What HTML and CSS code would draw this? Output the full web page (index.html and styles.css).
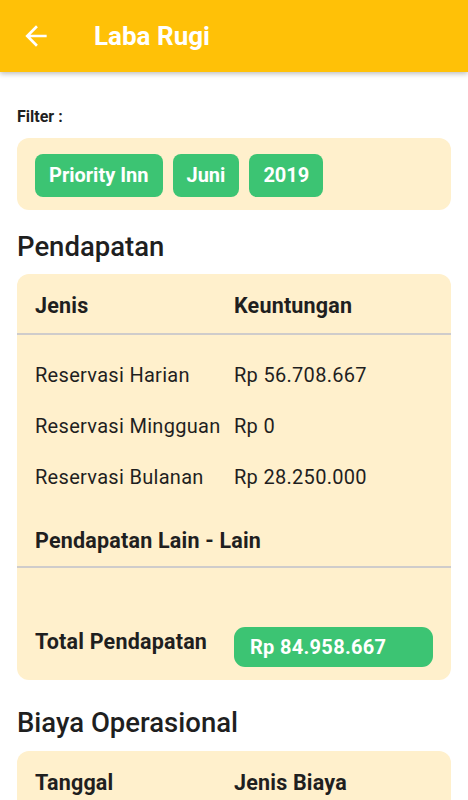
FILE: index.html
```html
<!DOCTYPE html>
<html lang="id">
<head>
    <meta charset="UTF-8">
    <meta name="viewport" content="width=device-width, initial-scale=1.0">
    <title>Laba Rugi</title>
    <link rel="stylesheet" href="styles.css">
</head>
<body>
    <!-- Barre du haut -->
    <div class="appbar">
        <svg class="back" width="32" height="32" viewBox="0 0 24 24">
            <path d="M20 11H7.83l5.59-5.59L12 4l-8 8 8 8 1.41-1.41L7.83 13H20v-2z" fill="#fff"/>
        </svg>
        <span class="title">Laba Rugi</span>
    </div>

    <div class="content">
        <div class="filter-label">Filter :</div>
        <div class="card filter">
            <span class="chip">Priority Inn</span>
            <span class="chip">Juni</span>
            <span class="chip">2019</span>
        </div>

        <h2 class="section">Pendapatan</h2>
        <div class="card">
            <div class="row head">
                <span>Jenis</span>
                <span>Keuntungan</span>
            </div>
            <div class="divider"></div>
            <div class="rows">
                <div class="row item"><span>Reservasi Harian</span><span>Rp 56.708.667</span></div>
                <div class="row item"><span>Reservasi Mingguan</span><span>Rp 0</span></div>
                <div class="row item"><span>Reservasi Bulanan</span><span>Rp 28.250.000</span></div>
            </div>
            <div class="lain">Pendapatan Lain - Lain</div>
            <div class="divider"></div>
            <div class="row total">
                <span class="total-label">Total Pendapatan</span>
                <span class="pill">Rp 84.958.667</span>
            </div>
        </div>

        <h2 class="section second">Biaya Operasional</h2>
        <div class="card">
            <div class="row head">
                <span>Tanggal</span>
                <span>Jenis Biaya</span>
            </div>
            <div class="divider"></div>
            <div class="rows">
                <div class="row item"><span>&nbsp;</span><span></span></div>
            </div>
        </div>
    </div>
</body>
</html>
```

FILE: styles.css
```css
body {
    font-family: Roboto, "Liberation Sans", sans-serif;
    margin: 0;
    padding: 0;
    background: #fff;
    color: #1f1f1f;
    overflow: hidden;
}
.appbar {
    height: 72px;
    background: #ffc107;
    display: flex;
    align-items: center;
    padding-left: 20px;
    box-shadow: 0 2px 5px rgba(0, 0, 0, 0.25);
    position: relative;
}
.appbar .back {
    display: block;
}
.appbar .title {
    color: #fff;
    font-size: 26px;
    font-weight: 700;
    margin-left: 42px;
}
.content {
    padding: 36px 17px 0;
}
.filter-label {
    font-size: 16px;
    font-weight: 700;
    line-height: 18px;
    margin-bottom: 12px;
}
.card {
    background: #fff0cc;
    border-radius: 12px;
}
.card.filter {
    display: flex;
    gap: 10px;
    padding: 16px 18px 13px;
}
.chip {
    background: #3cc473;
    color: #fff;
    font-size: 20px;
    font-weight: 700;
    line-height: 43px;
    padding: 0 14px;
    border-radius: 8px;
}
.section {
    font-size: 27.5px;
    font-weight: 500;
    line-height: 28px;
    margin: 23px 0 13px;
}
.section.second {
    margin-top: 29px;
    margin-bottom: 14px;
}
.row {
    display: grid;
    grid-template-columns: 199px 1fr;
    padding: 0 18px;
    font-size: 20px;
    letter-spacing: 0.3px;
    line-height: 24px;
}
.row.head {
    font-size: 21.5px;
    font-weight: 700;
    letter-spacing: 0.2px;
    padding-top: 20px;
    padding-bottom: 15px;
}
.divider {
    height: 2px;
    background: #cfcccb;
}
.rows {
    padding-top: 15px;
}
.row.item {
    padding-top: 13px;
    padding-bottom: 14px;
}
.lain {
    font-size: 21.5px;
    font-weight: 700;
    letter-spacing: 0.2px;
    line-height: 24px;
    padding: 26px 18px 13px;
}
.row.total {
    align-items: start;
    padding-top: 59px;
    padding-bottom: 13px;
    padding-right: 18px;
}
.total-label {
    font-size: 21.5px;
    font-weight: 700;
    letter-spacing: 0.2px;
    margin-top: 3px;
}
.pill {
    background: #3cc473;
    color: #fff;
    font-weight: 700;
    line-height: 40px;
    padding: 0 16px;
    border-radius: 11px;
}
```
